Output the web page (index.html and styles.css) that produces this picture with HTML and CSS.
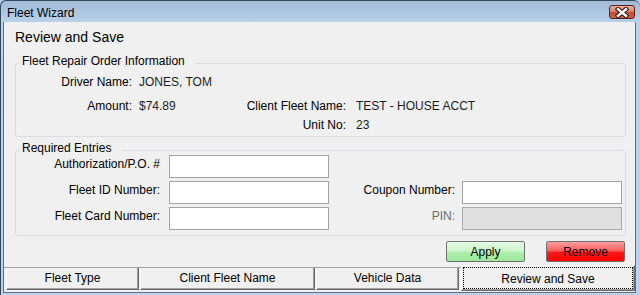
FILE: index.html
```html
<!DOCTYPE html>
<html>
<head>
<meta charset="utf-8">
<link rel="stylesheet" href="styles.css">
</head>
<body>
<div class="window">
  <div class="titlebar">
    <span class="title">Fleet Wizard</span>
    <button class="close" aria-label="Close">
      <svg width="14" height="11" viewBox="0 0 14 11">
        <path d="M3 2.2 L11 8.8 M11 2.2 L3 8.8" stroke="#3a1a14" stroke-width="4.6" stroke-linecap="square"/>
        <path d="M3 2.2 L11 8.8 M11 2.2 L3 8.8" stroke="#ffffff" stroke-width="2.4" stroke-linecap="square"/>
      </svg>
    </button>
  </div>
  <div class="client">
    <h1 class="heading">Review and Save</h1>
    <fieldset class="group group-info">
      <legend>Fleet Repair Order Information</legend>
      <div class="info-grid">
        <span class="lbl">Driver Name:</span><span class="val">JONES, TOM</span><span></span><span></span>
        <span class="lbl">Amount:</span><span class="val">$74.89</span><span class="lbl lbl2">Client Fleet Name:</span><span class="val">TEST - HOUSE ACCT</span>
        <span></span><span></span><span class="lbl lbl2">Unit No:</span><span class="val">23</span>
      </div>
    </fieldset>
    <fieldset class="group group-req">
      <legend>Required Entries</legend>
      <div class="req-grid">
        <label class="flbl">Authorization/P.O. #</label><input class="field" type="text"><span></span><span></span>
        <label class="flbl">Fleet ID Number:</label><input class="field" type="text"><label class="flbl flbl2">Coupon Number:</label><input class="field" type="text">
        <label class="flbl">Fleet Card Number:</label><input class="field" type="text"><label class="flbl flbl2 off">PIN:</label><input class="field" type="text" disabled>
      </div>
    </fieldset>
    <div class="actions">
      <button class="btn apply">Apply</button>
      <button class="btn remove">Remove</button>
    </div>
    <div class="tabs">
      <div class="tab t1">Fleet Type</div>
      <div class="tab t2">Client Fleet Name</div>
      <div class="tab t3">Vehicle Data</div>
      <div class="tab t4 active">Review and Save</div>
    </div>
  </div>
</div>
</body>
</html>
```
FILE: styles.css
```css
html, body {
  margin: 0;
  padding: 0;
}
body {
  width: 640px;
  height: 295px;
  overflow: hidden;
  font-family: "Liberation Sans", Arial, sans-serif;
  font-size: 12px;
  color: #000;
  background: #b9d2ec;
}
.window {
  box-sizing: border-box;
  width: 640px;
  height: 295px;
  border: 1px solid #35485c;
  border-right: none;
  border-bottom: none;
  border-radius: 6px 6px 0 0;
  padding: 0 4px 2px 2px;
  background: linear-gradient(#a0bad8 0, #bad2eb 22px, #b8d3ee 100%);
}
.titlebar {
  height: 21px;
  display: flex;
  justify-content: space-between;
  align-items: flex-start;
}
.title {
  padding: 5px 0 0 4px;
  line-height: 14px;
  font-size: 12px;
  color: #000;
}
.close {
  box-sizing: border-box;
  margin: 4px 1px 0 0;
  width: 26px;
  height: 14px;
  padding: 0;
  border: 1px solid #5a2419;
  border-radius: 3px;
  background: linear-gradient(#e9ab9b, #d8826f 48%, #c4492f 52%, #cc6048);
  display: flex;
  align-items: center;
  justify-content: center;
}
.close svg {
  display: block;
}
.client {
  box-sizing: border-box;
  height: 271px;
  border: 1px solid #5f6f80;
  border-top: none;
  background: #f0f0f0;
  display: flex;
  flex-direction: column;
}
.heading {
  margin: 7px 0 0 11px;
  font-size: 14px;
  line-height: 16px;
  font-weight: normal;
}
.group {
  margin: 13px 9px 0 11px;
  padding: 0 0 4px 0;
  border: 1px solid #d5dfe5;
  border-radius: 3px;
  min-width: 0;
}
.group legend {
  margin-left: 4px;
  padding: 0 10px 0 2px;
  line-height: 11px;
  font-size: 12px;
  position: relative;
  top: -2px;
}
.group-req {
  margin-top: 8px;
  padding-bottom: 5px;
}
.info-grid {
  display: grid;
  grid-template-columns: 123px 97px 120px 1fr;
  grid-template-rows: 24px 19px 14px;
  padding-top: 6px;
  line-height: 14px;
  align-items: start;
}
.lbl {
  text-align: right;
  padding-right: 7px;
}
.lbl2 {
  padding-right: 10px;
}
.val {
  color: #1c1c1c;
  white-space: nowrap;
}
.req-grid {
  display: grid;
  grid-template-columns: 153px 160px 133px 160px;
  grid-auto-rows: 23px;
  row-gap: 3px;
  margin-top: -1px;
}
.flbl {
  text-align: right;
  padding: 2px 9px 0 0;
  line-height: 14px;
}
.flbl2 {
  padding-right: 7px;
}
.off {
  color: #6d6d6d;
}
.field {
  box-sizing: border-box;
  width: 160px;
  height: 23px;
  margin: 0;
  padding: 0 3px;
  border: 1px solid #a3a3a3;
  background: #fff;
  font: inherit;
  outline: none;
}
.field:disabled {
  background: #e0e0e0;
  border-color: #aaaaaa;
}
.actions {
  display: flex;
  justify-content: flex-end;
  gap: 21px;
  margin: 5px 10px 0 0;
  height: 21px;
}
.btn {
  box-sizing: border-box;
  width: 79px;
  height: 21px;
  margin: 0;
  padding: 0;
  border: 1px solid #707070;
  border-radius: 2px;
  font-family: "Liberation Sans", Arial, sans-serif;
  font-size: 12px;
  line-height: 14px;
  color: #000;
}
.apply {
  background: linear-gradient(#e6fbe6, #cdf5cd 45%, #aeeeae 55%, #9ce99c);
}
.remove {
  background: linear-gradient(#ff9f9f, #ff6060 45%, #ff1a1a 55%, #ff0000);
}
.tabs {
  display: flex;
  margin-top: 3px;
  height: 26px;
  padding-left: 2px;
  background: linear-gradient(#a0a0a0, #a0a0a0) 0 2px / 100% 1px no-repeat;
}
.tab {
  box-sizing: border-box;
  margin-top: 3px;
  height: 22px;
  border-left: 1px solid #fff;
  border-right: 1px solid #696969;
  border-bottom: 1px solid #696969;
  box-shadow: inset -1px -1px 0 #a0a0a0;
  background: #f0f0f0;
  text-align: center;
  padding-top: 3px;
  line-height: 14px;
  white-space: nowrap;
}
.t1 { width: 133px; margin-right: 1px; }
.t2 { width: 175px; margin-right: 1px; }
.t3 { width: 143px; margin-right: 2px; }
.t4 { width: 174px; }
.tab.active {
  margin-top: 0;
  height: 26px;
  border-top: 1px solid #fff;
  padding-top: 6px;
  outline: 1px dotted #000;
  outline-offset: -3px;
}
```
